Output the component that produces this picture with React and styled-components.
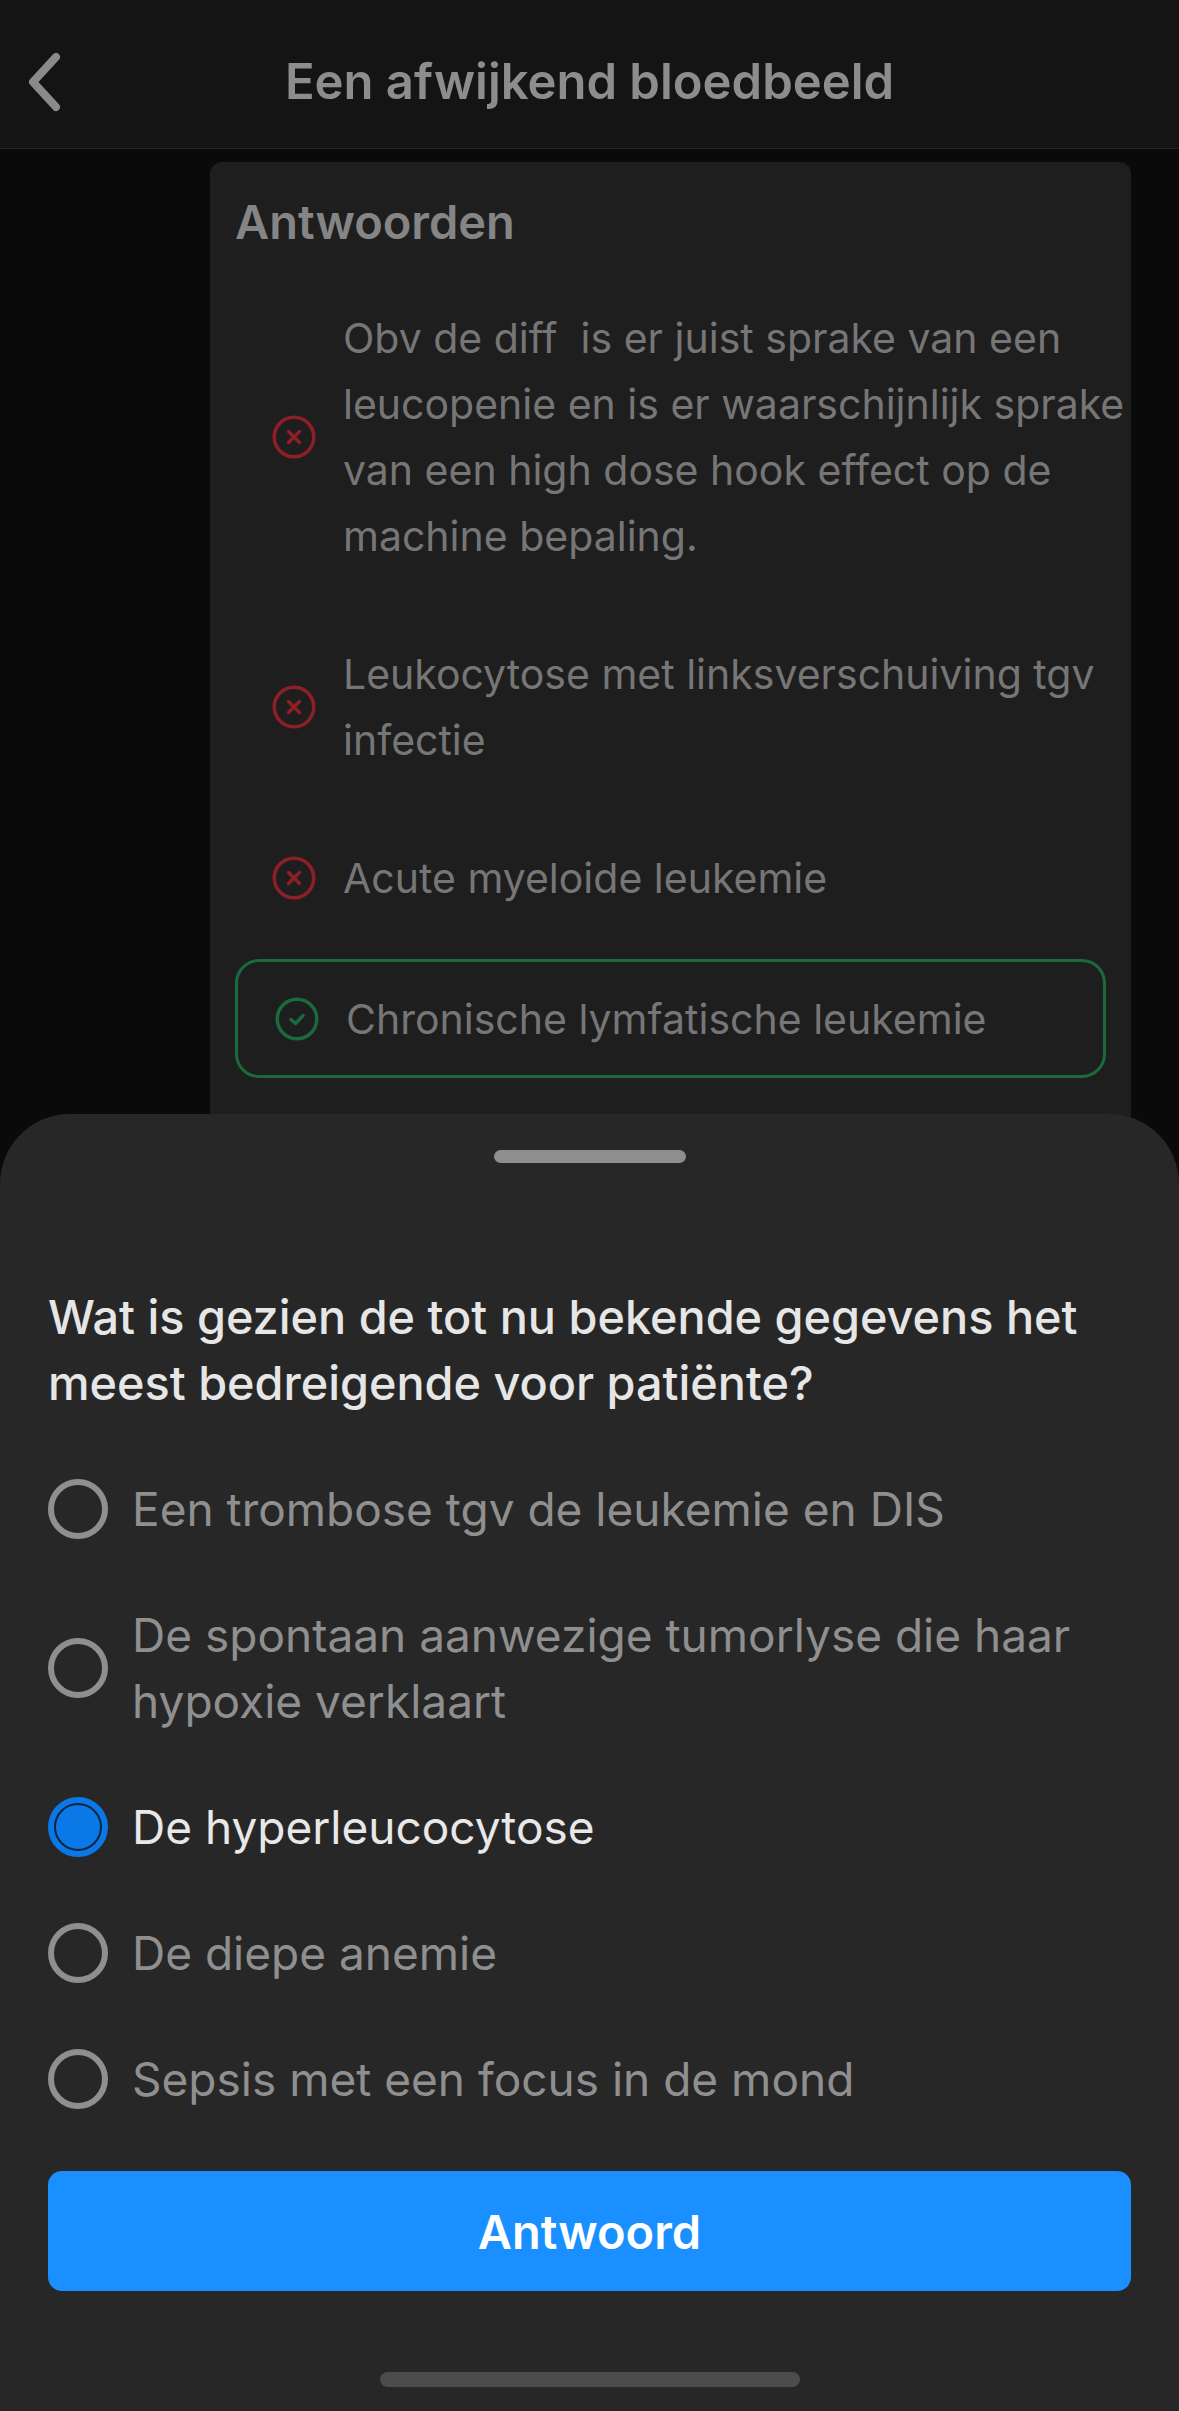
import React from 'react'
import styled, { createGlobalStyle } from 'styled-components'

const Global = createGlobalStyle`
  html, body {
    margin: 0;
    padding: 0;
    background: #0a0a0a;
    font-family: Inter, "Noto Sans", "Liberation Sans", sans-serif;
  }
  * { box-sizing: border-box; }
`

const Screen = styled.div`
  position: relative;
  width: 1179px;
  height: 2411px;
  overflow: hidden;
  background: #0a0a0a;
`

const Header = styled.header`
  position: relative;
  height: 149px;
  display: flex;
  align-items: center;
  justify-content: center;
  background: #141414;
  border-bottom: 1px solid #262626;
`

const BackButton = styled.button`
  position: absolute;
  left: 26px;
  top: 52px;
  width: 38px;
  height: 60px;
  padding: 0;
  border: 0;
  background: none;
  color: #8a8a8a;
`

const Title = styled.h1`
  margin: 15px 0 0;
  font-size: 49px;
  line-height: 56px;
  font-weight: 600;
  color: #8d8d8d;
`

const Card = styled.section`
  margin: 13px 48px 0 210px;
  height: 1100px;
  padding: 30px 0 0 25px;
  background: #1e1e1e;
  border-radius: 12px 12px 0 0;
`

const CardTitle = styled.h2`
  margin: 0 0 53px;
  font-size: 47px;
  line-height: 60px;
  font-weight: 600;
  color: #858585;
`

const AnswerList = styled.div`
  display: flex;
  flex-direction: column;
`

const AnswerRow = styled.div`
  display: flex;
  align-items: center;
  gap: 27px;
  margin-top: ${p => p.$gap}px;
  margin-right: ${p => (p.$correct ? '25px' : '0')};
  padding-left: 37px;
  min-height: ${p => (p.$correct ? '119px' : 'auto')};
  border: ${p => (p.$correct ? '3px solid #1a6a3b' : '0')};
  border-radius: 24px;
`

const AnswerIcon = styled.svg`
  flex: none;
  width: 44px;
  height: 44px;
`

const AnswerText = styled.div`
  flex: 1;
  font-size: 41px;
  line-height: 66px;
  color: #767676;
`

const Sheet = styled.div`
  position: absolute;
  left: 0;
  right: 0;
  bottom: 0;
  height: 1297px;
  padding: 36px 48px 0;
  background: #272727;
  border-radius: 70px 70px 0 0;
`

const Handle = styled.div`
  width: 192px;
  height: 13px;
  margin: 0 auto 121px;
  border-radius: 7px;
  background: #8e8e8e;
`

const Question = styled.h3`
  margin: 0 0 30px;
  font-size: 46.8px;
  line-height: 66px;
  font-weight: 500;
  color: #e6e6e6;
`

const Option = styled.div`
  display: flex;
  align-items: center;
  gap: 24px;
  padding: 30px 0;
`

const Radio = styled.span`
  flex: none;
  position: relative;
  width: 60px;
  height: 60px;
  border-radius: 50%;
  border: 6px solid ${p => (p.$checked ? '#0a78e6' : '#8f8f8f')};
  background: ${p => (p.$checked ? '#0a78e6' : 'transparent')};
  ${p => p.$checked && `
    &::after {
      content: "";
      position: absolute;
      inset: 0;
      border-radius: 50%;
      border: 2px solid #10253c;
    }
  `}
`

const OptionLabel = styled.div`
  flex: 1;
  font-size: 46px;
  line-height: 66px;
  color: ${p => (p.$checked ? '#e8e8e8' : '#8f8f8f')};
`

const SubmitButton = styled.button`
  display: block;
  width: 1083px;
  height: 120px;
  margin-top: 29px;
  border: 0;
  border-radius: 14px;
  background: #1a8fff;
  color: #fff;
  font-family: inherit;
  font-size: 47px;
  font-weight: 600;
`

const HomeBar = styled.div`
  width: 420px;
  height: 15px;
  margin: 81px auto 0;
  border-radius: 8px;
  background: #4c4c4c;
`

function WrongIcon() {
  return (
    <AnswerIcon viewBox="0 0 44 44" fill="none" stroke="#8e1f26" strokeLinecap="round">
      <circle cx="22" cy="22" r="19.75" strokeWidth="3.5" />
      <path d="M16.5 16.5l11 11M27.5 16.5l-11 11" strokeWidth="3.5" />
    </AnswerIcon>
  )
}

function RightIcon() {
  return (
    <AnswerIcon viewBox="0 0 44 44" fill="none" stroke="#1a6a3b" strokeLinecap="round" strokeLinejoin="round">
      <circle cx="22" cy="22" r="19.75" strokeWidth="3.5" />
      <path d="M16 22.5l4.5 4L28 18.5" strokeWidth="3.5" />
    </AnswerIcon>
  )
}

const answers = [
  {
    gap: 0,
    text: 'Obv de diff\u00a0 is er juist sprake van een leucopenie en is er waarschijnlijk sprake van een high dose hook effect op de machine bepaling.',
  },
  { gap: 72, text: 'Leukocytose met linksverschuiving tgv infectie' },
  { gap: 72, text: 'Acute myeloide leukemie' },
  { gap: 48, text: 'Chronische lymfatische leukemie', correct: true },
]

const options = [
  { text: 'Een trombose tgv de leukemie en DIS' },
  { text: 'De spontaan aanwezige tumorlyse die haar hypoxie verklaart' },
  { text: 'De hyperleucocytose', checked: true },
  { text: 'De diepe anemie' },
  { text: 'Sepsis met een focus in de mond' },
]

export default function App() {
  return (
    <Screen>
      <Global />
      <Header>
        <BackButton aria-label="Terug">
          <svg width="38" height="60" viewBox="0 0 38 60" fill="none" stroke="currentColor" strokeWidth="8" strokeLinecap="round" strokeLinejoin="round">
            <path d="M30 5L7 30l23 25" />
          </svg>
        </BackButton>
        <Title>Een afwijkend bloedbeeld</Title>
      </Header>
      <Card>
        <CardTitle>Antwoorden</CardTitle>
        <AnswerList>
          {answers.map(a => (
            <AnswerRow key={a.text} $gap={a.gap} $correct={a.correct}>
              {a.correct ? <RightIcon /> : <WrongIcon />}
              <AnswerText>{a.text}</AnswerText>
            </AnswerRow>
          ))}
        </AnswerList>
      </Card>
      <Sheet>
        <Handle />
        <Question>Wat is gezien de tot nu bekende gegevens het meest bedreigende voor patiënte?</Question>
        {options.map(o => (
          <Option key={o.text}>
            <Radio $checked={o.checked} />
            <OptionLabel $checked={o.checked}>{o.text}</OptionLabel>
          </Option>
        ))}
        <SubmitButton>Antwoord</SubmitButton>
        <HomeBar />
      </Sheet>
    </Screen>
  )
}
